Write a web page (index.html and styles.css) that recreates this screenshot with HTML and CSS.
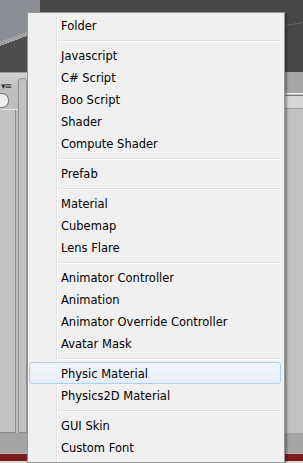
FILE: index.html
```html
<!DOCTYPE html>
<html lang="en">
<head>
    <meta charset="UTF-8">
    <title>Create menu</title>
    <link rel="stylesheet" href="styles.css">
</head>
<body>
    <div class="editor">
        <div class="scene">
            <div class="sky"></div>
        </div>
        <div class="panels">
            <div class="left">
                <div class="toolbar">
                    <span class="tool-icon">&#9662;&#8801;</span>
                </div>
                <div class="search-row">
                    <div class="search"></div>
                </div>
                <div class="left-body">
                    <div class="col-a"></div>
                    <div class="col-b"></div>
                </div>
                <div class="footer"></div>
                <div class="redbar"></div>
            </div>
            <div class="middle"></div>
            <div class="right">
                <div class="r-band"></div>
                <div class="r-hilite"></div>
                <div class="r-light"></div>
                <div class="r-body"></div>
                <div class="footer"></div>
                <div class="redbar"></div>
            </div>
        </div>
    </div>

    <div class="menu">
        <div class="item">Folder</div>
        <div class="sep"></div>
        <div class="item">Javascript</div>
        <div class="item">C# Script</div>
        <div class="item">Boo Script</div>
        <div class="item">Shader</div>
        <div class="item">Compute Shader</div>
        <div class="sep"></div>
        <div class="item">Prefab</div>
        <div class="sep"></div>
        <div class="item">Material</div>
        <div class="item">Cubemap</div>
        <div class="item">Lens Flare</div>
        <div class="sep"></div>
        <div class="item">Animator Controller</div>
        <div class="item">Animation</div>
        <div class="item">Animator Override Controller</div>
        <div class="item">Avatar Mask</div>
        <div class="sep"></div>
        <div class="item active">Physic Material</div>
        <div class="item">Physics2D Material</div>
        <div class="sep"></div>
        <div class="item">GUI Skin</div>
        <div class="item">Custom Font</div>
    </div>
</body>
</html>
```

FILE: styles.css
```css
body {
    margin: 0;
    width: 303px;
    height: 463px;
    overflow: hidden;
    font-family: "DejaVu Sans", Verdana, sans-serif;
    position: relative;
    background: #c0c0c0;
}
.editor {
    display: flex;
    flex-direction: column;
    height: 463px;
}
.scene {
    height: 72px;
    background:
        linear-gradient(170deg, transparent 0 60%, rgba(255,255,255,0.12) 60% 61%, transparent 61%),
        #474747;
}
.sky {
    width: 40px;
    height: 72px;
    background: linear-gradient(160deg, #8b8e94 0 48%, #a3a3a3 48% 53%, #4d4d4d 53%);
}
.panels {
    flex: 1;
    display: flex;
}
.left {
    width: 27px;
    display: flex;
    flex-direction: column;
    background: #bdbdbd;
}
.toolbar {
    height: 18px;
    background: linear-gradient(#d2d2d2, #bdbdbd);
    border-top: 1px solid #9a9a9a;
    display: flex;
    align-items: flex-end;
    font-size: 9px;
    color: #333;
    line-height: 9px;
}
.tool-icon {
    margin-left: 1px;
    letter-spacing: -1px;
}
.search-row {
    height: 18px;
    border-bottom: 1px solid #e6e6e6;
    display: flex;
    align-items: center;
}
.search {
    width: 8px;
    height: 13px;
    border: 1px solid #777;
    border-left: none;
    border-radius: 0 7px 7px 0;
    background: #eeeeee;
}
.left-body {
    flex: 1;
    display: flex;
    gap: 2px;
}
.col-a {
    width: 16px;
    background: #c2c2c2;
    border-right: 1px solid #8e8e8e;
    border-bottom: 1px solid #8e8e8e;
}
.col-b {
    width: 7px;
    background: #c2c2c2;
    border: 1px solid #8e8e8e;
    border-radius: 3px 3px 0 0;
    margin-top: -32px;
}
.footer {
    height: 20px;
    background: #a4a4a4;
}
.redbar {
    height: 7px;
    background: #7a1c1c;
    border-top: 1px solid #b9b9b9;
    border-bottom: 2px solid #d8d8d8;
}
.middle {
    flex: 1;
    background: #c0c0c0;
}
.right {
    width: 19px;
    display: flex;
    flex-direction: column;
    background: #c0c0c0;
}
.r-band {
    height: 21px;
    background: #a6a6a6;
}
.r-hilite {
    height: 1px;
    border-top: 1px solid #f4f4f4;
    border-bottom: 1px solid #7c7c7c;
}
.r-light {
    height: 12px;
    background: #d6d6d6;
    border-bottom: 1px solid #9a9a9a;
}
.r-body {
    flex: 1;
    background: #c1c1c1;
}
.menu {
    position: absolute;
    left: 27px;
    top: 12px;
    width: 256px;
    height: 446px;
    padding: 1px 0 2px;
    background:
        linear-gradient(90deg, transparent 28px, #e2e3e3 28px 29px, #ffffff 29px 30px, transparent 30px),
        #f0f0f0;
    border: 1px solid #979797;
    box-shadow: 2px 2px 2px rgba(0, 0, 0, 0.35);
}
.item {
    height: 19px;
    padding-top: 3px;
    line-height: 19px;
    padding-left: 33px;
    font-size: 11.5px;
    color: #000;
    white-space: nowrap;
}
.item.active {
    margin: 0 3px 0 1px;
    height: 18px;
    padding-top: 2px;
    line-height: 18px;
    padding-left: 31px;
    border: 1px solid #aed0f4;
    border-radius: 3px;
    background: linear-gradient(#f2f6fc, #e6edf8);
}
.sep {
    height: 8px;
    margin: 0 2px 0 30px;
    background: linear-gradient(transparent 4px, #e0e0e0 4px 5px, #ffffff 5px 6px, transparent 6px);
}
```
